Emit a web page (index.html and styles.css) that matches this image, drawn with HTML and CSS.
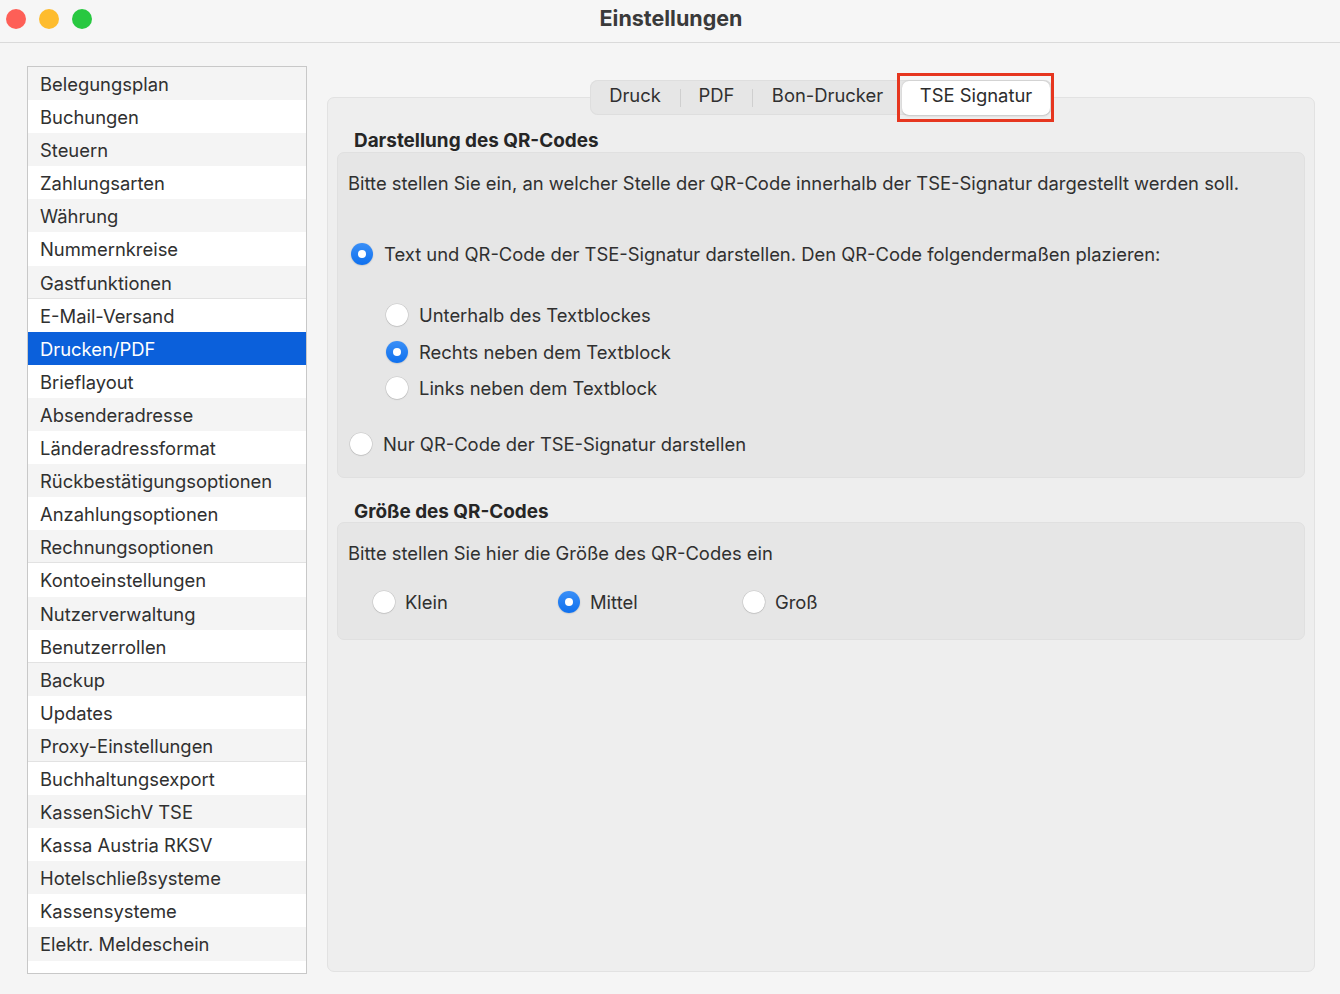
FILE: index.html
```html
<!DOCTYPE html>
<html lang="de">
<head>
<meta charset="utf-8">
<title>Einstellungen</title>
<link rel="stylesheet" href="styles.css">
</head>
<body>
<div class="window">
  <header class="titlebar">
    <div class="lights">
      <span class="light red"></span>
      <span class="light yellow"></span>
      <span class="light green"></span>
    </div>
    <div class="title">Einstellungen</div>
    <div></div>
  </header>
  <div class="content">
    <ul class="sidebar">
      <li>Belegungsplan</li>
      <li>Buchungen</li>
      <li>Steuern</li>
      <li>Zahlungsarten</li>
      <li>Währung</li>
      <li>Nummernkreise</li>
      <li class="sep">Gastfunktionen</li>
      <li>E-Mail-Versand</li>
      <li class="selected">Drucken/PDF</li>
      <li>Brieflayout</li>
      <li>Absenderadresse</li>
      <li>Länderadressformat</li>
      <li>Rückbestätigungsoptionen</li>
      <li>Anzahlungsoptionen</li>
      <li class="sep">Rechnungsoptionen</li>
      <li>Kontoeinstellungen</li>
      <li>Nutzerverwaltung</li>
      <li class="sep">Benutzerrollen</li>
      <li>Backup</li>
      <li>Updates</li>
      <li class="sep">Proxy-Einstellungen</li>
      <li>Buchhaltungsexport</li>
      <li>KassenSichV TSE</li>
      <li>Kassa Austria RKSV</li>
      <li>Hotelschließsysteme</li>
      <li>Kassensysteme</li>
      <li>Elektr. Meldeschein</li>
    </ul>
    <main class="main">
      <div class="tabs-row">
        <div class="segmented">
          <div class="tab t-druck">Druck</div>
          <div class="divider"></div>
          <div class="tab t-pdf">PDF</div>
          <div class="divider"></div>
          <div class="tab t-bon">Bon-Drucker</div>
          <div class="tab t-tse active">TSE Signatur</div>
        </div>
      </div>
      <section class="panel">
        <h2 class="group-title first">Darstellung des QR-Codes</h2>
        <div class="group group-1">
          <p class="desc">Bitte stellen Sie ein, an welcher Stelle der QR-Code innerhalb der TSE-Signatur dargestellt werden soll.</p>
          <div class="option opt-main"><span class="radio checked"></span><span>Text und QR-Code der TSE-Signatur darstellen. Den QR-Code folgendermaßen plazieren:</span></div>
          <div class="sub-options">
            <div class="option"><span class="radio"></span><span>Unterhalb des Textblockes</span></div>
            <div class="option"><span class="radio checked"></span><span>Rechts neben dem Textblock</span></div>
            <div class="option"><span class="radio"></span><span>Links neben dem Textblock</span></div>
          </div>
          <div class="option opt-only"><span class="radio"></span><span>Nur QR-Code der TSE-Signatur darstellen</span></div>
        </div>
        <h2 class="group-title second">Größe des QR-Codes</h2>
        <div class="group group-2">
          <p class="desc">Bitte stellen Sie hier die Größe des QR-Codes ein</p>
          <div class="size-row">
            <div class="option size"><span class="radio"></span><span>Klein</span></div>
            <div class="option size"><span class="radio checked"></span><span>Mittel</span></div>
            <div class="option size"><span class="radio"></span><span>Groß</span></div>
          </div>
        </div>
      </section>
    </main>
  </div>
</div>
</body>
</html>
```
FILE: styles.css
```css
* { box-sizing: border-box; }
html, body { margin: 0; padding: 0; }
body {
  width: 1340px;
  height: 994px;
  background: #f5f5f5;
  font-family: Inter, "Noto Sans", "Liberation Sans", sans-serif;
  color: #303030;
  font-size: 18.4px;
  overflow: hidden;
}
.window { width: 1340px; height: 994px; display: flex; flex-direction: column; }

.titlebar {
  height: 43px;
  flex: none;
  display: grid;
  grid-template-columns: 1fr auto 1fr;
  align-items: center;
  background: #f6f6f6;
  border-bottom: 1px solid #dadada;
}
.lights { display: flex; gap: 13px; padding-left: 6px; margin-bottom: 4px; }
.light { width: 20px; height: 20px; border-radius: 50%; display: block; }
.red { background: #fe5f57; }
.yellow { background: #febc2e; }
.green { background: #28c840; }
.title { font-weight: 700; font-size: 21.5px; color: #3a3a3a; padding-left: 2px; padding-bottom: 6px; }

.content {
  flex: 1;
  display: flex;
  gap: 20px;
  padding: 23px 25px 0 27px;
}

.sidebar {
  list-style: none;
  margin: 0;
  padding: 0;
  width: 280px;
  height: 908px;
  flex: none;
  background: #fff;
  border: 1px solid #c8c8c8;
}
.sidebar li {
  height: 33.1px;
  line-height: 32px;
  padding-top: 1px;
  padding-left: 12px;
  white-space: nowrap;
}
.sidebar li:nth-child(odd) { background: #f4f4f4; }
.sidebar li.sep { box-shadow: inset 0 -1px 0 #e2e2e2; }
.sidebar li.selected { background: #0b60db; color: #fff; }

.main { flex: 1; display: flex; flex-direction: column; }
.tabs-row {
  display: flex;
  justify-content: center;
  margin-top: 14px;
  position: relative;
  z-index: 1;
}
.segmented {
  display: flex;
  align-items: center;
  height: 35px;
  background: #e6e6e6;
  border-radius: 8px;
  box-shadow: inset 0 0 0 1px #dedede;
}
.tab { height: 35px; line-height: 31px; text-align: center; }
.t-druck { width: 90px; }
.t-pdf { width: 71px; }
.t-bon { width: 149px; }
.divider { width: 1px; height: 18px; background: #cfcfcf; }
.tab.active {
  position: relative;
  width: 148px;
  height: 34px;
  line-height: 29px;
  margin-right: 2px;
  background: #fff;
  border-radius: 7px;
  box-shadow: 0 0.5px 2px rgba(0,0,0,0.18);
  color: #2c2c2c;
}
.tab.active::after {
  content: "";
  position: absolute;
  top: -8px; left: -5px; right: -4px; bottom: -7px;
  border: 3px solid #e6361f;
}

.panel {
  margin-top: -18px;
  height: 875px;
  background: #eeeeee;
  border: 1px solid #e2e2e2;
  border-radius: 7px;
  padding: 0 9px;
}
.group-title {
  margin: 0;
  font-size: 18.9px;
  font-weight: 700;
  color: #262626;
  padding-left: 17px;
}
.group-title.first { margin-top: 30px; padding-top: 2px; line-height: 22px; }
.group-title.second { margin-top: 21px; padding-top: 2px; line-height: 21px; }

.group {
  background: #e6e6e6;
  border-radius: 7px;
  border: 1px solid #e0e0e0;
  padding: 0 10px;
}
.group-1 { height: 326px; padding-top: 19px; }
.group-2 { height: 118px; padding-top: 19px; }
.desc { margin: 0; line-height: 22px; }

.option { display: flex; align-items: center; gap: 11px; height: 22px; line-height: 22px; white-space: nowrap; }
.opt-main { margin-top: 49px; padding-left: 3px; }
.sub-options { margin-top: 39px; padding-left: 38px; display: flex; flex-direction: column; gap: 14.5px; }
.opt-only { margin-top: 34px; padding-left: 2px; }

.size-row { display: flex; margin-top: 27px; padding-left: 25px; }
.option.size { width: 185px; gap: 10px; }

.radio {
  width: 22px;
  height: 22px;
  flex: none;
  border-radius: 50%;
  background: #fff;
  box-shadow: 0 0 0 0.5px rgba(0,0,0,0.12), 0 0.5px 1.5px rgba(0,0,0,0.15);
  position: relative;
}
.radio.checked {
  background: linear-gradient(#3a8ff7, #0f70ee);
  box-shadow: 0 0.5px 1.5px rgba(0,0,0,0.2);
}
.radio.checked::after {
  content: "";
  position: absolute;
  left: 7px; top: 7px;
  width: 8px; height: 8px;
  border-radius: 50%;
  background: #fff;
}
```
